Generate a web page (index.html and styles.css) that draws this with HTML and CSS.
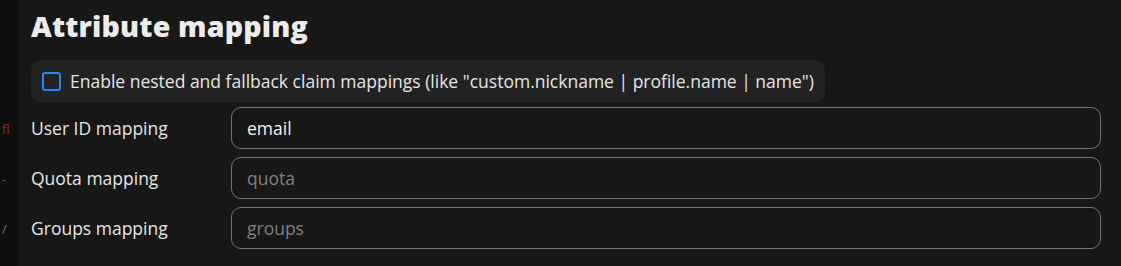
FILE: index.html
```html
<!DOCTYPE html>
<html lang="en">
<head>
    <meta charset="UTF-8">
    <title>Attribute mapping</title>
    <link rel="stylesheet" href="styles.css">
</head>
<body>
    <div class="backdrop">
        <div class="backdrop-text">fl</div>
        <div class="backdrop-text dash">-</div>
        <div class="backdrop-text slash">/</div>
    </div>

    <section class="panel">
        <h2 class="title">Attribute mapping</h2>

        <label class="check-box">
            <span class="check"></span>
            Enable nested and fallback claim mappings (like "custom.nickname | profile.name | name")
        </label>

        <div class="row">
            <label for="user-id">User ID mapping</label>
            <input type="text" id="user-id" value="email">
        </div>
        <div class="row">
            <label for="quota">Quota mapping</label>
            <input type="text" id="quota" placeholder="quota">
        </div>
        <div class="row">
            <label for="groups">Groups mapping</label>
            <input type="text" id="groups" placeholder="groups">
        </div>
    </section>
</body>
</html>
```

FILE: styles.css
```css
body {
    margin: 0;
    height: 266px;
    overflow: hidden;
    display: flex;
    background: #171717;
    font-family: "Open Sans", "Noto Sans", sans-serif;
    color: #e8e8e8;
}
.backdrop {
    width: 18px;
    flex-shrink: 0;
    background: #0e0e0e;
    overflow: hidden;
    padding-top: 120px;
    font-size: 13px;
    color: #7a3c3c;
}
.backdrop-text {
    height: 50px;
    padding-left: 2px;
}
.backdrop-text.dash {
    color: #55557a;
}
.backdrop-text.slash {
    color: #777;
}
.panel {
    flex: 1;
    padding: 0 20px 0 13px;
}
.title {
    margin: 8px 0 16px 0;
    font-size: 28.5px;
    font-weight: 800;
    line-height: 36px;
    color: #ececec;
    letter-spacing: 0.2px;
}
.check-box {
    display: inline-flex;
    align-items: center;
    gap: 9px;
    height: 42px;
    padding: 0 11px;
    background: #222222;
    border-radius: 10px;
    font-size: 17.5px;
    color: #e6e6e6;
    box-sizing: border-box;
}
.check {
    width: 15px;
    height: 15px;
    border: 2px solid #1a8cff;
    border-radius: 3px;
}
.row {
    display: flex;
    align-items: center;
    height: 42px;
    margin-top: 8px;
}
.row:first-of-type {
    margin-top: 5px;
}
.row label {
    width: 200px;
    font-size: 17.5px;
    color: #e6e6e6;
}
.row input {
    flex: 1;
    height: 42px;
    box-sizing: border-box;
    background: #171717;
    border: 1px solid #747474;
    border-radius: 10px;
    padding: 0 15px;
    font-family: inherit;
    font-size: 17.5px;
    color: #f0f0f0;
    outline: none;
}
.row input::placeholder {
    color: #808080;
}
```
